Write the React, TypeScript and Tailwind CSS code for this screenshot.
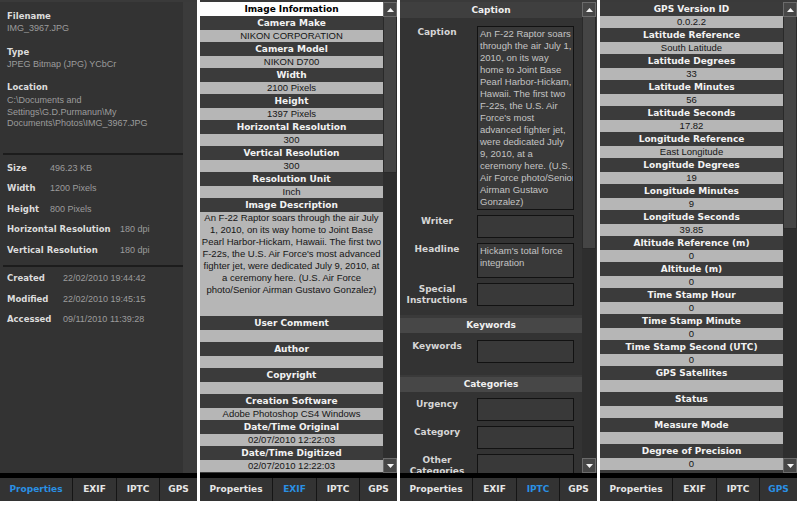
import { ReactElement } from "react";

const BOLD = "font-['DejaVu_Sans',sans-serif] font-bold";
const SANS = "font-['Liberation_Sans',Arial,sans-serif]";

type Row = { kind: "head" | "value" | "title"; text: string };

const exifRows: Row[] = [
  { kind: "title", text: "Image Information" },
  { kind: "head", text: "Camera Make" },
  { kind: "value", text: "NIKON CORPORATION" },
  { kind: "head", text: "Camera Model" },
  { kind: "value", text: "NIKON D700" },
  { kind: "head", text: "Width" },
  { kind: "value", text: "2100 Pixels" },
  { kind: "head", text: "Height" },
  { kind: "value", text: "1397 Pixels" },
  { kind: "head", text: "Horizontal Resolution" },
  { kind: "value", text: "300" },
  { kind: "head", text: "Vertical Resolution" },
  { kind: "value", text: "300" },
  { kind: "head", text: "Resolution Unit" },
  { kind: "value", text: "Inch" },
  { kind: "head", text: "Image Description" },
];

const exifRowsAfter: Row[] = [
  { kind: "head", text: "User Comment" },
  { kind: "value", text: "" },
  { kind: "head", text: "Author" },
  { kind: "value", text: "" },
  { kind: "head", text: "Copyright" },
  { kind: "value", text: "" },
  { kind: "head", text: "Creation Software" },
  { kind: "value", text: "Adobe Photoshop CS4 Windows" },
  { kind: "head", text: "Date/Time Original" },
  { kind: "value", text: "02/07/2010 12:22:03" },
  { kind: "head", text: "Date/Time Digitized" },
  { kind: "value", text: "02/07/2010 12:22:03" },
  { kind: "head", text: "Date/Time Modified" },
];

const description = [
  "An F-22 Raptor soars through the air July",
  "1, 2010, on its way home to Joint Base",
  "Pearl Harbor-Hickam, Hawaii. The first two",
  "F-22s, the U.S. Air Force's most advanced",
  "fighter jet, were dedicated July 9, 2010, at",
  "a ceremony here. (U.S. Air Force",
  "photo/Senior Airman Gustavo Gonzalez)",
];

const caption = [
  "An F-22 Raptor soars",
  "through the air July 1,",
  "2010, on its way",
  "home to Joint Base",
  "Pearl Harbor-Hickam,",
  "Hawaii. The first two",
  "F-22s, the U.S. Air",
  "Force's most",
  "advanced fighter jet,",
  "were dedicated July",
  "9, 2010, at a",
  "ceremony here. (U.S.",
  "Air Force photo/Senior",
  "Airman Gustavo",
  "Gonzalez)",
];

const gps: [string, string][] = [
  ["GPS Version ID", "0.0.2.2"],
  ["Latitude Reference", "South Latitude"],
  ["Latitude Degrees", "33"],
  ["Latitude Minutes", "56"],
  ["Latitude Seconds", "17.82"],
  ["Longitude Reference", "East Longitude"],
  ["Longitude Degrees", "19"],
  ["Longitude Minutes", "9"],
  ["Longitude Seconds", "39.85"],
  ["Altitude Reference (m)", "0"],
  ["Altitude (m)", "0"],
  ["Time Stamp Hour", "0"],
  ["Time Stamp Minute", "0"],
  ["Time Stamp Second (UTC)", "0"],
  ["GPS Satellites", ""],
  ["Status", ""],
  ["Measure Mode", ""],
  ["Degree of Precision", "0"],
  ["Speed Reference", ""],
];

const DataRow = ({ row }: { row: Row }): ReactElement => {
  if (row.kind === "title") {
    return (
      <div className={`h-[14px] shrink-0 bg-white text-black text-[9px] leading-[14px] text-center ${BOLD}`}>
        {row.text}
      </div>
    );
  }
  if (row.kind === "head") {
    return (
      <div className={`h-[14px] shrink-0 bg-[#3b3b3b] text-[#f2f2f2] text-[9px] leading-[14px] text-center whitespace-nowrap ${BOLD}`}>
        {row.text}
      </div>
    );
  }
  return (
    <div className={`h-[12px] shrink-0 bg-[#b6b6b6] text-[#151515] text-[9.5px] leading-[12px] text-center whitespace-nowrap ${SANS}`}>
      {row.text}
    </div>
  );
};

const Scrollbar = ({ thumb }: { thumb: string }): ReactElement => (
  <div className="w-[14px] shrink-0 flex flex-col bg-[#2e2e2e]">
    <div className="h-[15px] shrink-0 bg-[#474747] border border-[#6b6b6b] flex items-center justify-center">
      <svg width="7" height="4" viewBox="0 0 7 4">
        <path d="M0 4 L3.5 0 L7 4 Z" fill="#f4f4f4" />
      </svg>
    </div>
    <div className="flex-1 flex flex-col">
      <div className={`${thumb} shrink-0 bg-[#454545] border-x border-b border-[#2a2a2a]`} />
    </div>
    <div className="h-[15px] shrink-0 bg-[#474747] border border-[#6b6b6b] flex items-center justify-center">
      <svg width="7" height="4" viewBox="0 0 7 4">
        <path d="M0 0 L3.5 4 L7 0 Z" fill="#f4f4f4" />
      </svg>
    </div>
  </div>
);

const Tabs = ({ active }: { active: string }): ReactElement => {
  const tabs: [string, string][] = [
    ["Properties", "w-[72px]"],
    ["EXIF", "w-[43px]"],
    ["IPTC", "w-[42px]"],
    ["GPS", "flex-1"],
  ];
  return (
    <div className="shrink-0">
      <div className="h-[5px] bg-black" />
      <div className="h-[23px] flex gap-px bg-[#151515]">
        {tabs.map(([label, width]) => (
          <div
            key={label}
            className={`${width} bg-[#333333] flex items-center justify-center text-[9px] ${BOLD} ${
              label === active ? "text-[#2a90e4]" : "text-[#e6e6e6]"
            }`}
          >
            {label}
          </div>
        ))}
      </div>
    </div>
  );
};

const Panel = ({ active, children }: { active: string; children: React.ReactNode }): ReactElement => (
  <div className="w-[197px] h-[501px] flex flex-col bg-[#3a3a3a] pt-[2px]">
    <div className="h-[471px] flex overflow-hidden">{children}</div>
    <Tabs active={active} />
  </div>
);

const PropLabel = ({ label, value }: { label: string; value: string[] }): ReactElement => (
  <div className="mb-[11px]">
    <div className={`h-[13px] leading-[13px] text-[8.5px] text-[#dcdcdc] ${BOLD}`}>{label}</div>
    {value.map((line) => (
      <div key={line} className={`h-[11.5px] leading-[11.5px] text-[9px] text-[#9c9c9c] whitespace-nowrap ${SANS}`}>
        {line}
      </div>
    ))}
  </div>
);

const PropRow = ({ label, value, width }: { label: string; value: string; width: string }): ReactElement => (
  <div className="h-[20.5px] flex items-center pl-[7px]">
    <div className={`${width} shrink-0 text-[8.5px] text-[#dcdcdc] whitespace-nowrap ${BOLD}`}>{label}</div>
    <div className={`text-[9px] text-[#9c9c9c] whitespace-nowrap ${SANS}`}>{value}</div>
  </div>
);

const Separator = (): ReactElement => <div className="h-[2px] ml-[3px] bg-[#1c1c1c]" />;

const PropertiesPanel = (): ReactElement => (
  <Panel active="Properties">
    <div className="w-[183px] bg-[#333333] flex flex-col">
      <div className="pl-[7px] pt-[8px] h-[151px]">
        <PropLabel label="Filename" value={["IMG_3967.JPG"]} />
        <PropLabel label="Type" value={["JPEG Bitmap (JPG) YCbCr"]} />
        <div>
          <div className={`h-[14px] leading-[13px] text-[8.5px] text-[#dcdcdc] ${BOLD}`}>Location</div>
          {["C:\\Documents and", "Settings\\G.D.Purmanun\\My", "Documents\\Photos\\IMG_3967.JPG"].map((line) => (
            <div key={line} className={`h-[11.5px] leading-[11.5px] text-[9px] text-[#9c9c9c] whitespace-nowrap ${SANS}`}>
              {line}
            </div>
          ))}
        </div>
      </div>
      <Separator />
      <div className="pt-[3px] pb-[4px]">
        <PropRow label="Size" value="496.23 KB" width="w-[43px]" />
        <PropRow label="Width" value="1200 Pixels" width="w-[43px]" />
        <PropRow label="Height" value="800 Pixels" width="w-[43px]" />
        <PropRow label="Horizontal Resolution" value="180 dpi" width="w-[113px]" />
        <PropRow label="Vertical Resolution" value="180 dpi" width="w-[113px]" />
      </div>
      <Separator />
      <div className="pt-[2px]">
        <PropRow label="Created" value="22/02/2010 19:44:42" width="w-[56px]" />
        <PropRow label="Modified" value="22/02/2010 19:45:15" width="w-[56px]" />
        <PropRow label="Accessed" value="09/11/2010 11:39:28" width="w-[56px]" />
      </div>
    </div>
    <div className="flex-1 bg-[#3b3b3b]" />
  </Panel>
);

const ExifPanel = (): ReactElement => (
  <Panel active="EXIF">
    <div className="w-[183px] flex flex-col bg-[#3b3b3b]">
      {exifRows.map((row, index) => (
        <DataRow key={index} row={row} />
      ))}
      <div className={`h-[104px] shrink-0 bg-[#b6b6b6] text-[#151515] text-[9.5px] text-center ${SANS}`}>
        {description.map((line) => (
          <div key={line} className="h-[12px] leading-[12px] whitespace-nowrap">
            {line}
          </div>
        ))}
      </div>
      {exifRowsAfter.map((row, index) => (
        <DataRow key={index} row={row} />
      ))}
    </div>
    <Scrollbar thumb="h-[156px]" />
  </Panel>
);

const Field = ({ label, height, lines }: { label: string[]; height: string; lines?: string[] }): ReactElement => (
  <div className="flex">
    <div className={`w-[74px] shrink-0 text-center text-[9px] leading-[11px] pt-[1px] text-[#d6d6d6] ${BOLD}`}>
      {label.map((l) => (
        <div key={l}>{l}</div>
      ))}
    </div>
    <div
      className={`${height} w-[97px] ml-[3px] shrink-0 bg-[#393939] border border-[#121212] px-[2px] pt-[1px] overflow-hidden text-[9.5px] leading-[12px] text-[#c4c4c4] ${SANS}`}
    >
      {lines?.map((l) => (
        <div key={l} className="whitespace-nowrap">
          {l}
        </div>
      ))}
    </div>
  </div>
);

const Band = ({ title }: { title: string }): ReactElement => (
  <div className={`h-[15px] shrink-0 bg-[#474747] text-[#f0f0f0] text-[9px] leading-[15px] text-center ${BOLD}`}>
    {title}
  </div>
);

const IptcPanel = (): ReactElement => (
  <Panel active="IPTC">
    <div className="w-[182px] flex flex-col bg-[#3a3a3a]">
      <div className={`h-[16px] shrink-0 bg-[#3f3f3f] text-[#f0f0f0] text-[9px] leading-[16px] text-center ${BOLD}`}>
        Caption
      </div>
      <div className="bg-[#333333] pt-[8px] pb-[9px] flex flex-col gap-[5px]">
        <Field label={["Caption"]} height="h-[184px]" lines={caption} />
        <Field label={["Writer"]} height="h-[23px]" />
        <Field label={["Headline"]} height="h-[35px]" lines={["Hickam's total force", "integration"]} />
        <Field label={["Special", "Instructions"]} height="h-[23px]" />
      </div>
      <div className="h-[3px] shrink-0" />
      <Band title="Keywords" />
      <div className="bg-[#333333] pt-[7px] pb-[12px]">
        <Field label={["Keywords"]} height="h-[23px]" />
      </div>
      <div className="h-[2px] shrink-0" />
      <Band title="Categories" />
      <div className="bg-[#333333] pt-[6px] flex flex-col gap-[5px] flex-1">
        <Field label={["Urgency"]} height="h-[23px]" />
        <Field label={["Category"]} height="h-[23px]" />
        <Field label={["Other", "Categories"]} height="h-[23px]" />
      </div>
    </div>
    <Scrollbar thumb="h-[232px]" />
  </Panel>
);

const GpsPanel = (): ReactElement => (
  <Panel active="GPS">
    <div className="w-[183px] flex flex-col bg-[#3b3b3b]">
      {gps.map(([head, value]) => (
        <div key={head} className="flex flex-col">
          <DataRow row={{ kind: "head", text: head }} />
          <DataRow row={{ kind: "value", text: value }} />
        </div>
      ))}
    </div>
    <Scrollbar thumb="h-[212px]" />
  </Panel>
);

const App = (): ReactElement => (
  <div className="w-[800px] h-[506px] bg-white flex gap-[3px] overflow-hidden">
    <PropertiesPanel />
    <ExifPanel />
    <IptcPanel />
    <GpsPanel />
  </div>
);

export default App;
